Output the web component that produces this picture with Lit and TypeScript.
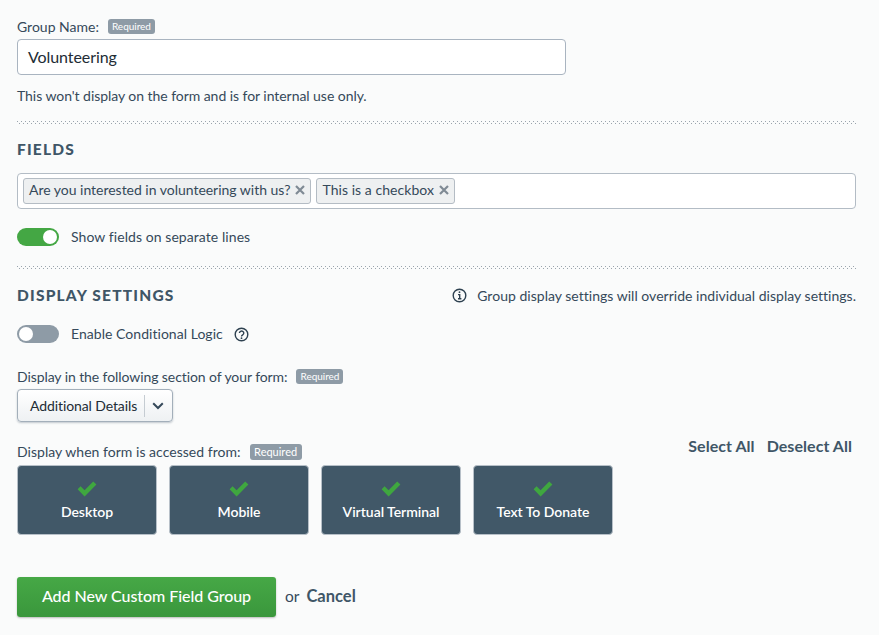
import { LitElement, html, css } from "lit";
import { customElement } from "lit/decorators.js";

const check = html`<svg class="check" viewBox="0 0 20 16" width="20" height="16"><path d="M.6 8.2 L3.6 5.2 L7.6 9.2 L16.2 .6 L19.4 3.6 L7.6 15.4 Z" fill="#3fa73f"/></svg>`;

@customElement("app-root")
export class AppRoot extends LitElement {
  static styles = css`
    :host { display: block; width: 879px; height: 635px; overflow: hidden; background: #fafbfb; color: #35495a;
      font-family: Lato, "Open Sans", sans-serif; font-size: 14px; line-height: 17px; }
    * { box-sizing: border-box; }
    .page { display: flex; flex-direction: column; padding: 18px 23px 0 17px; }
    .label { display: flex; align-items: center; gap: 9px; height: 17px; }
    .req { display: inline-block; background: #8e9ba6; color: #fff; font-size: 10px; line-height: 15px; height: 15px; padding: 0 4px; border-radius: 3px; letter-spacing: -.02px; }
    .req.big { font-size: 11px; height: 16px; line-height: 16px; padding: 0 4.5px; letter-spacing: 0; }
    .input { margin-top: 4px; width: 549px; height: 36px; border: 1px solid #a9b4c0; border-radius: 4px; background: #fff; padding: 0 10px 2px; display: flex; align-items: center; color: #222c35; font-size: 16px; letter-spacing: -.08px; }
    .hint { margin-top: 12px; letter-spacing: -.05px; }
    .sep { height: 4px; margin-top: 17px; background-image: conic-gradient(transparent 75%, #a4adb5 0), conic-gradient(transparent 75%, #a4adb5 0); background-size: 2px 2px; background-repeat: repeat; background-position: 0 0; }
    .sep { background-image: conic-gradient(from 0deg at 1px 1px, transparent 75%, #9aa4ad 0), conic-gradient(from 0deg at 1px 1px, transparent 75%, #9aa4ad 0); background-size: 4px 4px; background-position: 0 0, 2px 2px; }
    .sep.second { margin-top: 20px; }
    h2 { margin: 0; font-size: 15.5px; line-height: 18px; font-weight: 900; letter-spacing: 1.2px; color: #3f5667; }
    h2.fields-title { margin-top: 15px; }
    .fields { margin-top: 15px; height: 36px; border: 1px solid #b3bcc5; border-radius: 4px; background: #fff; padding: 4px 5px; display: flex; gap: 5px; }
    .tag { display: flex; align-items: center; height: 26px; padding: 0 5px 4px; background: #eef0f1; border: 1px solid #b4bcc4; border-radius: 3px; gap: 5px; color: #35495a; letter-spacing: -.02px; }
    .tag.wide { letter-spacing: .05px; }
    .tag svg { display: block; margin-top: 1px; }
    .toggle-row { display: flex; align-items: center; height: 18px; gap: 12px; }
    .toggle-row span { padding-bottom: 2px; }
    .toggle-row.first { margin-top: 19px; letter-spacing: .07px; }
    .toggle-row.second { margin-top: 21px; letter-spacing: .04px; }
    .toggle { width: 42px; height: 18px; border-radius: 9px; background: #44a744; position: relative; flex: none; }
    .toggle::after { content: ""; position: absolute; top: 2px; right: 2px; width: 14px; height: 14px; border-radius: 50%; background: #fff; }
    .toggle.off { background: #8e9ba6; }
    .toggle.off::after { right: auto; left: 2px; }
    .head { display: flex; justify-content: space-between; align-items: center; margin-top: 16px; }
    .note { display: flex; align-items: center; gap: 10px; letter-spacing: .02px; }
    .help { margin-left: -1px; }
    .label.section { margin-top: 25px; letter-spacing: -.085px; }
    .select { margin-top: 4px; width: 156px; height: 33px; border: 1px solid #a3afba; border-radius: 4px; background: linear-gradient(#fff, #eef1f3); box-shadow: 0 1px 2px rgba(60,80,100,.3); display: flex; align-items: center; padding-left: 12px; color: #222c35; letter-spacing: -.1px; }
    .select .div { width: 1px; height: 22px; background: #c5ccd2; margin-left: 7px; }
    .select svg { margin-left: 7px; }
    .row-between { display: flex; justify-content: space-between; align-items: flex-start; margin-top: 21px; }
    .row-between .label { letter-spacing: .03px; }
    .links { display: flex; gap: 12px; padding-right: 4px; margin-top: -7px; height: 19px; font-weight: 700; font-size: 16px; line-height: 19px; letter-spacing: .05px; color: #3f5667; }
    .tiles { margin-top: 5px; display: flex; gap: 12px; }
    .tile { width: 140px; height: 70px; background: #415868; border: 1px solid #b7c0c8; border-radius: 4px; color: #fff; display: flex; flex-direction: column; align-items: center; padding-top: 15px; font-weight: 600; letter-spacing: -.03px; }
    .tile span { margin-top: 6px; }
    .actions { margin-top: 42px; display: flex; align-items: center; gap: 8px; }
    .btn { width: 259px; height: 40px; padding-bottom: 4px; border-radius: 3px; background: linear-gradient(#46a846, #3a973c); color: #fff; font-size: 16px; font-weight: 500; letter-spacing: -.05px; display: flex; align-items: center; justify-content: center; box-shadow: 0 1px 2px rgba(0,0,0,.25); }
    .cancel { font-weight: 700; font-size: 16.5px; color: #3f5667; padding-bottom: 1px; margin-left: -1px; }
    .or { font-size: 15.5px; padding-bottom: 2px; padding-left: 1px; }
  `;

  render() {
    return html`<div class="page">
      <div class="label">Group Name: <span class="req">Required</span></div>
      <div class="input">Volunteering</div>
      <div class="hint">This won't display on the form and is for internal use only.</div>
      <div class="sep"></div>
      <h2 class="fields-title">FIELDS</h2>
      <div class="fields">
        <div class="tag">Are you interested in volunteering with us? ${this.x()}</div>
        <div class="tag wide">This is a checkbox ${this.x()}</div>
      </div>
      <div class="toggle-row first"><div class="toggle"></div><span>Show fields on separate lines</span></div>
      <div class="sep second"></div>
      <div class="head"><h2>DISPLAY SETTINGS</h2>
        <div class="note"><svg width="15" height="15" viewBox="0 0 15 15" fill="none" stroke="#2e4150" stroke-width="1.4"><circle cx="7.5" cy="7.5" r="6.3"/><path d="M6 6.6h1.7v4M6 10.8h3.4" /><circle cx="7.5" cy="4.2" r=".9" fill="#2e4150" stroke="none"/></svg>Group display settings will override individual display settings.</div></div>
      <div class="toggle-row second"><div class="toggle off"></div><span>Enable Conditional Logic</span>
        <svg class="help" width="15" height="15" viewBox="0 0 15 15" fill="none" stroke="#2e4150" stroke-width="1.4"><circle cx="7.5" cy="7.5" r="6.3"/><path d="M5.4 6a2.2 2 0 1 1 3.3 1.8c-.8.5-1.2.9-1.2 1.7"/><circle cx="7.5" cy="11.2" r=".9" fill="#2e4150" stroke="none"/></svg></div>
      <div class="label section">Display in the following section of your form: <span class="req">Required</span></div>
      <div class="select">Additional Details<span class="div"></span><svg width="12" height="8" viewBox="0 0 12 8" fill="none" stroke="#35495a" stroke-width="2"><path d="M1.2 1.3 6 6l4.8-4.7"/></svg></div>
      <div class="row-between">
        <div class="label">Display when form is accessed from: <span class="req big">Required</span></div>
        <div class="links"><span>Select All</span><span>Deselect All</span></div>
      </div>
      <div class="tiles">
        ${["Desktop", "Mobile", "Virtual Terminal", "Text To Donate"].map((t) => html`<div class="tile">${check}<span>${t}</span></div>`)}
      </div>
      <div class="actions"><div class="btn">Add New Custom Field Group</div><span class="or">or</span><span class="cancel">Cancel</span></div>
    </div>`;
  }

  x() {
    return html`<svg width="10" height="10" viewBox="0 0 10 10" stroke="#7f8a94" stroke-width="2.2"><path d="M1 1l8 8M9 1l-8 8"/></svg>`;
  }
}
